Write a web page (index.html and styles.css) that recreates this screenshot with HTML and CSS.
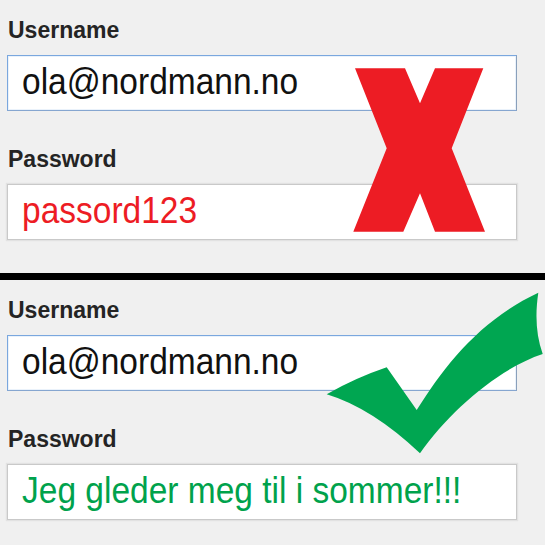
FILE: index.html
```html
<!DOCTYPE html>
<html lang="no">
<head>
<meta charset="utf-8">
<title>Passord</title>
<link rel="stylesheet" href="styles.css">
</head>
<body>
<main class="page">
  <section class="panel panel-bad">
    <div class="form">
      <div class="group">
        <div class="label">Username</div>
        <div class="field field-focus"><span class="value">ola@nordmann.no</span></div>
      </div>
      <div class="group">
        <div class="label">Password</div>
        <div class="field"><span class="value value-bad">passord123</span></div>
      </div>
    </div>
    <svg class="mark" viewBox="0 0 545 273" width="545" height="273" aria-hidden="true">
      <polygon fill="#ed1c24" points="355,68.3 405,68.3 420,103.3 435,68.3 483.3,68.3 451.7,148.3 485,231.7 435,231.7 420,193.3 403.3,231.7 353.3,231.7 386.7,148.3"/>
    </svg>
  </section>
  <div class="divider"></div>
  <section class="panel panel-good">
    <div class="form">
      <div class="group">
        <div class="label">Username</div>
        <div class="field field-focus"><span class="value">ola@nordmann.no</span></div>
      </div>
      <div class="group">
        <div class="label">Password</div>
        <div class="field"><span class="value value-good">Jeg gleder meg til i sommer!!!</span></div>
      </div>
    </div>
    <svg class="mark" viewBox="0 0 545 265" width="545" height="265" aria-hidden="true">
      <path fill="#00a651" d="M326.7 114.3 Q355 98 386.7 87.3 L416.7 130 C445 85 480 40 538.3 12.7 C535 35 536 55 542.7 74 C500 88 450 130 420 173.3 Q372 128 326.7 114.3 Z"/>
    </svg>
  </section>
</main>
</body>
</html>
```
FILE: styles.css
```css
html, body {
  margin: 0;
  padding: 0;
  background: #f0f0f0;
}

.page {
  width: 545px;
  height: 545px;
  overflow: hidden;
  display: flex;
  flex-direction: column;
}

.panel {
  position: relative;
  flex: none;
  background: #f0f0f0;
}

.panel-bad {
  height: 273px;
}

.panel-good {
  height: 265px;
}

.form {
  display: flex;
  flex-direction: column;
  gap: 35px;
  padding: 17px 0 0 7px;
  width: 510px;
}

.group {
  display: flex;
  flex-direction: column;
  gap: 12px;
}

.label {
  font-family: "Liberation Sans", Arial, sans-serif;
  font-weight: bold;
  font-size: 23px;
  line-height: 26px;
  height: 26px;
  color: #242424;
  padding-left: 1px;
}

.field {
  box-sizing: border-box;
  height: 56px;
  background: #fff;
  border: 1px solid #c9c9c9;
  box-shadow: 0 0 1px 1px #e2e2e2;
  display: flex;
  align-items: center;
  padding-left: 14px;
}

.field-focus {
  border-color: #7aa7de #8aa0bb #86a6d0 #7aa7de;
  box-shadow: inset 0 0 0 1px #eaf2fb;
}

.value {
  display: inline-block;
  font-family: "Liberation Sans", Arial, sans-serif;
  font-size: 33.5px;
  line-height: 38px;
  color: #111;
  white-space: nowrap;
  transform: scaleY(1.12);
  position: relative;
  top: -1px;
}

.value-bad {
  color: #ed1c24;
}

.value-good {
  color: #00a24c;
}

.divider {
  flex: none;
  height: 7px;
  background: #000;
}

.mark {
  position: absolute;
  left: 0;
  top: 0;
  pointer-events: none;
}
```
